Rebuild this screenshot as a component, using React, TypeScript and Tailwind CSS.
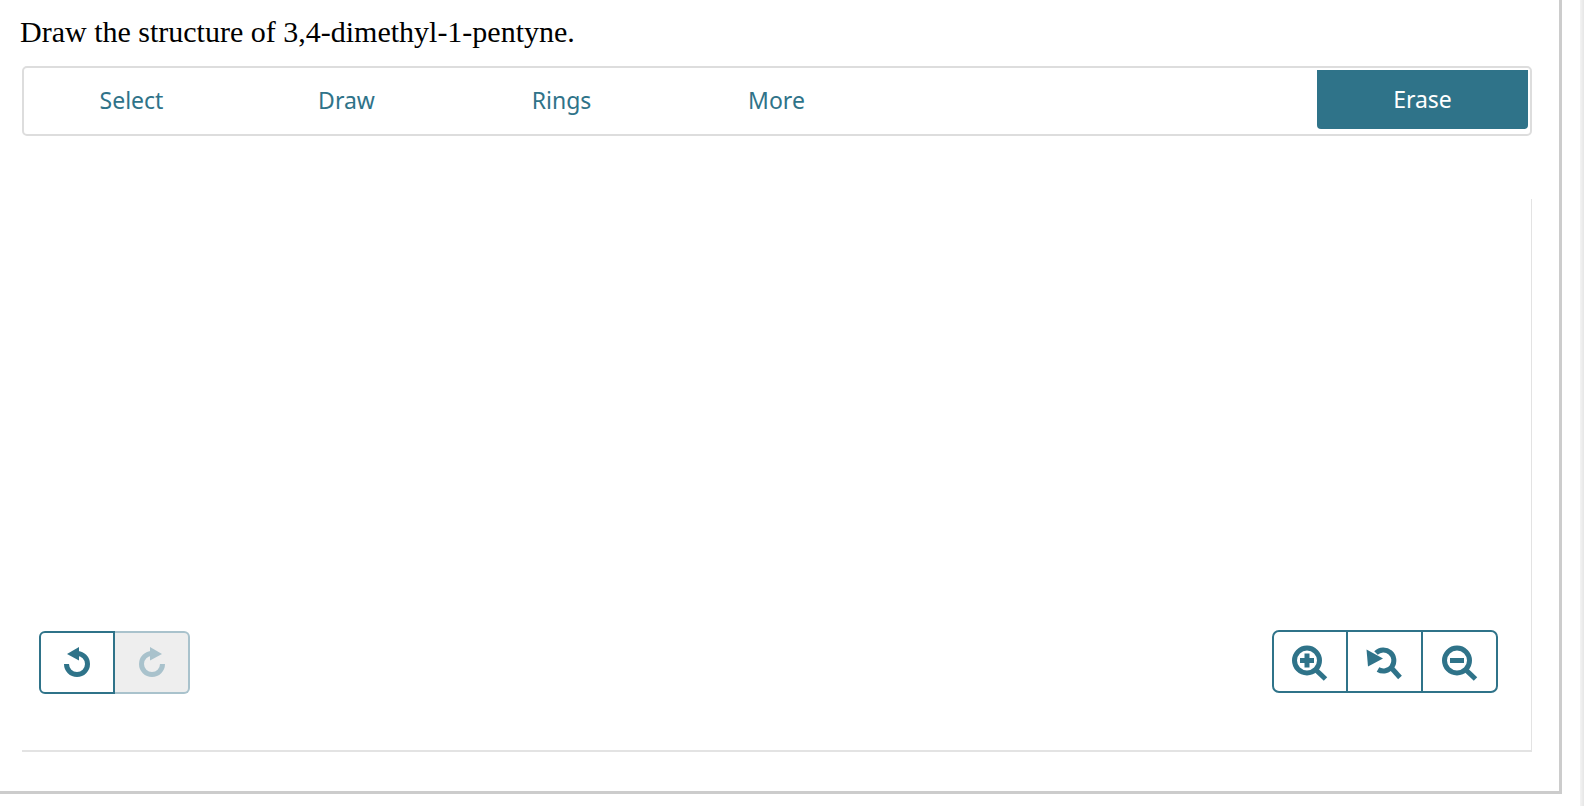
const tabs = ["Select", "Draw", "Rings", "More"];

function UndoIcon({ flip }: { flip?: boolean }) {
  return (
    <svg width="40" height="40" viewBox="0 0 40 40" className={flip ? "-scale-x-100" : ""}>
      <path d="M20 10.5A10.5 10.5 0 1 1 9.5 21" fill="none" stroke="currentColor" strokeWidth="5" />
      <path d="M10 11L22 4V17.5Z" fill="currentColor" />
    </svg>
  );
}

function ZoomIcon({ kind }: { kind: "in" | "reset" | "out" }) {
  return (
    <svg width="40" height="40" viewBox="0 0 40 40">
      {kind === "reset" ? (
        <>
          <path d="M11 11A10.5 10.5 0 1 1 13 27.5" fill="none" stroke="currentColor" strokeWidth="5" />
          <path d="M1.5 7.5L3 24.5L18 16.5Z" fill="currentColor" />
          <path d="M26.5 26L35 35.5" stroke="currentColor" strokeWidth="5" />
        </>
      ) : (
        <>
          <circle cx="17" cy="18.5" r="12.5" fill="none" stroke="currentColor" strokeWidth="5" />
          <path d="M26 28L35.5 37" stroke="currentColor" strokeWidth="5" />
          <path d="M10 18.5H24" stroke="currentColor" strokeWidth="5" />
          {kind === "in" && <path d="M17 11.5V25.5" stroke="currentColor" strokeWidth="5" />}
        </>
      )}
    </svg>
  );
}

export default function App() {
  return (
    <div className="flex h-[806px] w-[1584px] overflow-hidden bg-white font-['Noto_Sans',sans-serif]">
      <div className="h-[794px] w-[1562px] shrink-0 border-r-[3px] border-b-[3px] border-[#cccccc] pt-[15px] pl-[20px]">
        <h1 className="h-[51px] font-['Liberation_Serif',serif] text-[30px] leading-[34px] text-black">
          Draw the structure of 3,4-dimethyl-1-pentyne.
        </h1>

        {/* toolbar */}
        <div className="ml-[2px] flex h-[70px] w-[1510px] rounded-[5px] border-2 border-[#dddddd] pr-[2px]">
          {tabs.map(t => (
            <button key={t} className="h-[64px] w-[215px] text-[23px] text-[#2f7389]">{t}</button>
          ))}
          <button className="mt-[2px] ml-auto h-[59px] w-[211px] rounded-b-[4px] bg-[#2f7389] text-[23px] text-white">Erase</button>
        </div>

        {/* canvas */}
        <div className="mt-[63px] ml-[2px] flex h-[553px] w-[1510px] items-start justify-between border-r border-b-2 border-[#e3e3e3] pt-[432px] pr-[33px] pl-[17px]">
          <div className="flex h-[63px]">
            <button className="flex w-[76px] items-center justify-center rounded-l-[6px] border-2 border-[#2f7389] text-[#2f7389]">
              <UndoIcon />
            </button>
            <button className="flex w-[75px] items-center justify-center rounded-r-[6px] border-2 border-l-0 border-[#a9c2cc] bg-[#eeeeee] text-[#a9c2cc]">
              <UndoIcon flip />
            </button>
          </div>
          <div className="-mt-px flex h-[63px] w-[226px] rounded-[7px] border-2 border-[#2f7389] text-[#2f7389]">
            <button className="flex w-[74px] items-center justify-center border-r-2 border-[#2f7389]"><ZoomIcon kind="in" /></button>
            <button className="flex w-[75px] items-center justify-center border-r-2 border-[#2f7389]"><ZoomIcon kind="reset" /></button>
            <button className="flex flex-1 items-center justify-center"><ZoomIcon kind="out" /></button>
          </div>
        </div>
      </div>
      <div className="ml-auto h-full w-[4px] bg-gradient-to-r from-[#f4f4f4] to-[#e6e6e6]" />
    </div>
  );
}
